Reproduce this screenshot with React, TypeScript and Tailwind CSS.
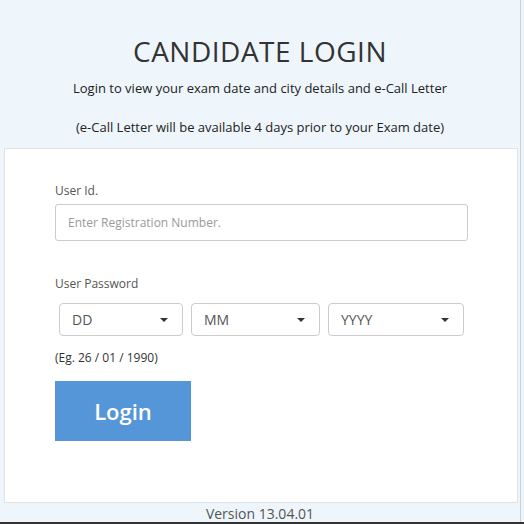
import React from "react";

function Select({ label, width }: { label: string; width: string }) {
  return (
    <div
      className={`${width} h-[33px] border border-[#ccc] rounded-[4px] bg-white flex items-center justify-between pl-[12px] pr-[14px]`}
    >
      <span className="text-[14px] text-[#555]">{label}</span>
      <svg width="8" height="4" viewBox="0 0 8 4">
        <path d="M0 0 L8 0 L4 4 Z" fill="#333" />
      </svg>
    </div>
  );
}

export default function App() {
  return (
    <div
      className="w-[524px] h-[524px] bg-[#eef6fc] overflow-hidden"
      style={{ fontFamily: '"Open Sans", sans-serif' }}
    >
      <div className="w-[521px] h-[522px] border-r border-[#c9d0d6] flex flex-col">
        <div className="h-[148px] shrink-0 flex flex-col items-center">
          <h1 className="mt-[33px] text-[28px] leading-[36px] text-[#333] tracking-[0.5px]">
            CANDIDATE LOGIN
          </h1>
          <p className="mt-[10px] text-[13px] leading-[18px] text-[#222]">
            Login to view your exam date and city details and e-Call Letter
          </p>
          <p className="mt-[21px] text-[13px] leading-[18px] text-[#222]">
            (e-Call Letter will be available 4 days prior to your Exam date)
          </p>
        </div>
        <div className="mx-[4px] w-[514px] h-[355px] shrink-0 bg-white border border-[#dde3e8] pl-[50px] pt-[34px]">
          <div className="text-[12px] leading-[16px] text-[#555]">User Id.</div>
          <div className="mt-[5px] w-[413px] h-[37px] border border-[#ccc] rounded-[3px] flex items-center pl-[12px]">
            <span className="text-[12px] text-[#999]">Enter Registration Number.</span>
          </div>
          <div className="mt-[35px] text-[12px] leading-[16px] text-[#555]">User Password</div>
          <div className="mt-[11px] ml-[4px] flex gap-[8px]">
            <Select label="DD" width="w-[124px]" />
            <Select label="MM" width="w-[129px]" />
            <Select label="YYYY" width="w-[136px]" />
          </div>
          <div className="mt-[14px] text-[12px] leading-[16px] text-[#333]">(Eg. 26 / 01 / 1990)</div>
          <button className="mt-[15px] w-[136px] h-[60px] bg-[#5596d9] text-white text-[22px] font-semibold flex items-center justify-center">
            Login
          </button>
        </div>
        <div className="flex-1 flex items-center justify-center text-[14px] text-[#555] pb-[2px]">
          Version 13.04.01
        </div>
      </div>
      <div className="h-[2px] bg-[#333]" />
    </div>
  );
}
